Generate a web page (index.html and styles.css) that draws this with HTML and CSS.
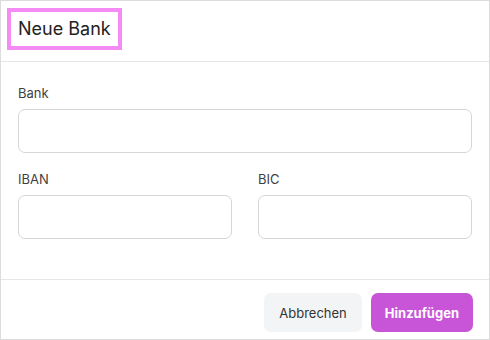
FILE: index.html
```html
<!DOCTYPE html>
<html>
  <head>
    <meta charset="utf-8">
    <title>Neue Bank</title>
    <link rel="stylesheet" href="styles.css">
  </head>
  <body>
    <div class="dialog">
      <div class="header">
        <h2 class="title">Neue Bank</h2>
      </div>
      <div class="content">
        <div class="field">
          <label>Bank</label>
          <input type="text">
        </div>
        <div class="row">
          <div class="field">
            <label>IBAN</label>
            <input type="text">
          </div>
          <div class="field">
            <label>BIC</label>
            <input type="text">
          </div>
        </div>
      </div>
      <div class="footer">
        <button class="btn cancel">Abbrechen</button>
        <button class="btn primary">Hinzufügen</button>
      </div>
    </div>
  </body>
</html>
```

FILE: styles.css
```css
body {
  margin:0;
  font-family:Inter, "Noto Sans", sans-serif;
  background:#fff;
}
.dialog {
  width:490px;
  height:340px;
  box-sizing:border-box;
  border:1px solid #dcdcdc;
  display:flex;
  flex-direction:column;
}
.header {
  padding:7px 6px 11px;
  border-bottom:1px solid #e6e6e6;
  display:flex;
}
.title {
  margin:0;
  font-size:18px;
  font-weight:400;
  line-height:22px;
  color:#222;
  padding:6px 7px;
  border:4px solid #f58cf5;
}
.content {
  padding:21px 17px 0;
  flex:1;
  border-bottom:1px solid #e6e6e6;
}
.field {
  display:flex;
  flex-direction:column;
  margin-bottom:16px;
  min-width:0;
}
.field label {
  font-size:13px;
  line-height:20px;
  color:#3f3f3f;
  margin-bottom:6px;
}
.field input {
  height:44px;
  width:100%;
  min-width:0;
  box-sizing:border-box;
  border:1px solid #d6d6d6;
  border-radius:7px;
  padding:0 12px;
  font-family:inherit;
  font-size:14px;
}
.row {
  display:grid;
  grid-template-columns:minmax(0, 1fr) minmax(0, 1fr);
  gap:26px;
}
.footer {
  display:flex;
  justify-content:flex-end;
  gap:9px;
  padding:13px 16px 7px;
}
.btn {
  height:39px;
  border:none;
  border-radius:7px;
  font-family:inherit;
  font-size:13px;
  padding:0 15px;
}
.cancel {
  background:#f3f4f6;
  color:#333;
}
.primary {
  background:#c855d8;
  color:#fff;
  font-weight:700;
  padding:0 14px;
}
```
